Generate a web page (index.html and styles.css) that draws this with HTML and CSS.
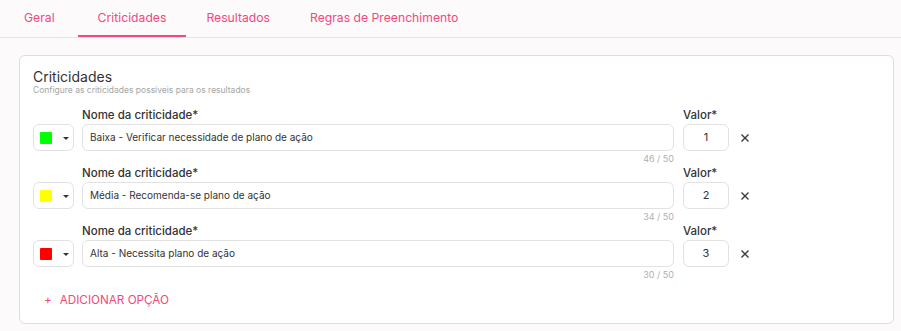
FILE: index.html
```html
<!DOCTYPE html>
<html lang="pt">
<head>
<meta charset="utf-8">
<link rel="stylesheet" href="styles.css">
</head>
<body>
<nav class="tabs">
  <div class="tab">Geral</div>
  <div class="tab active">Criticidades</div>
  <div class="tab">Resultados</div>
  <div class="tab">Regras de Preenchimento</div>
</nav>
<section class="card">
  <h2 class="title">Criticidades</h2>
  <p class="subtitle">Configure as criticidades possíveis para os resultados</p>

  <div class="row">
    <div class="color-pick"><span class="swatch green"></span><span class="caret"></span></div>
    <div class="name-field">
      <label class="label">Nome da criticidade*</label>
      <div class="input">Baixa - Verificar necessidade de plano de ação</div>
      <div class="counter">46 / 50</div>
    </div>
    <div class="value-field">
      <label class="label">Valor*</label>
      <div class="input num">1</div>
    </div>
    <svg class="remove" width="10" height="10" viewBox="0 0 10 10"><path d="M1.5 1.5 L8.5 8.5 M8.5 1.5 L1.5 8.5" stroke="#3a3a3a" stroke-width="1.4" fill="none"/></svg>
  </div>

  <div class="row">
    <div class="color-pick"><span class="swatch yellow"></span><span class="caret"></span></div>
    <div class="name-field">
      <label class="label">Nome da criticidade*</label>
      <div class="input">Média - Recomenda-se plano de ação</div>
      <div class="counter">34 / 50</div>
    </div>
    <div class="value-field">
      <label class="label">Valor*</label>
      <div class="input num">2</div>
    </div>
    <svg class="remove" width="10" height="10" viewBox="0 0 10 10"><path d="M1.5 1.5 L8.5 8.5 M8.5 1.5 L1.5 8.5" stroke="#3a3a3a" stroke-width="1.4" fill="none"/></svg>
  </div>

  <div class="row">
    <div class="color-pick"><span class="swatch red"></span><span class="caret"></span></div>
    <div class="name-field">
      <label class="label">Nome da criticidade*</label>
      <div class="input">Alta - Necessita plano de ação</div>
      <div class="counter">30 / 50</div>
    </div>
    <div class="value-field">
      <label class="label">Valor*</label>
      <div class="input num">3</div>
    </div>
    <svg class="remove" width="10" height="10" viewBox="0 0 10 10"><path d="M1.5 1.5 L8.5 8.5 M8.5 1.5 L1.5 8.5" stroke="#3a3a3a" stroke-width="1.4" fill="none"/></svg>
  </div>

  <button class="add"><span class="plus">+</span>ADICIONAR OPÇÃO</button>
</section>
</body>
</html>
```
FILE: styles.css
```css
* { box-sizing: border-box; }
body {
  margin: 0;
  background: #fdfafc;
  font-family: Inter, "Noto Sans", sans-serif;
  color: #333;
}
.tabs {
  display: flex;
  padding-left: 4px;
  border-bottom: 1px solid #e6e3e5;
  height: 38px;
}
.tab {
  padding: 1px 20px 0;
  height: 37px;
  font-size: 12.2px;
  line-height: 34px;
  color: #f0497c;
  border-bottom: 2px solid transparent;
}
.tab.active { border-bottom-color: #f0497c; }
.tab:first-child { padding-right: 23px; }
.card {
  margin: 17px 7px 0 19px;
  background: #fff;
  border: 1px solid #dedede;
  border-radius: 6px;
  padding: 13px 14px 15px 13px;
}
.title {
  margin: 0;
  font-size: 14px;
  font-weight: 400;
  line-height: 16px;
  color: #333;
}
.subtitle {
  margin: 0 0 12px;
  font-size: 8.5px;
  line-height: 10px;
  color: #a5a5a5;
}
.row {
  display: flex;
  align-items: flex-start;
  height: 58px;
}
.color-pick {
  margin-top: 17px;
  width: 41px;
  height: 27px;
  border: 1px solid #e2e2e2;
  border-radius: 6px;
  display: flex;
  align-items: center;
  padding-left: 6px;
}
.swatch { width: 12px; height: 12px; border-radius: 1px; }
.green { background: #00ff00; }
.yellow { background: #ffff00; }
.red { background: #ff0000; }
.caret {
  margin-left: 11px;
  width: 0; height: 0;
  border-left: 3px solid transparent;
  border-right: 3px solid transparent;
  border-top: 3.5px solid #333;
  margin-top: 2px;
}
.name-field { margin-left: 8px; width: 592px; }
.label {
  display: block;
  font-size: 11.5px;
  font-weight: 500;
  line-height: 17px;
  color: #333;
}
.input {
  height: 27px;
  border: 1px solid #e2e2e2;
  border-radius: 6px;
  font-size: 10px;
  line-height: 25px;
  padding-left: 7px;
  color: #333;
}
.counter {
  text-align: right;
  font-size: 9px;
  line-height: 15px;
  color: #b0b0b0;
}
.value-field { margin-left: 9px; width: 46px; }
.input.num { padding-left: 0; text-align: center; font-size: 11px; }
.remove {
  margin: 26px 0 0 11px;
}
.add {
  margin: 11px 0 0 11px;
  background: none;
  border: 0;
  font-family: inherit;
  font-size: 11.7px;
  line-height: 16px;
  color: #f0497c;
  padding: 0;
}
.plus { margin-right: 8px; }
```
